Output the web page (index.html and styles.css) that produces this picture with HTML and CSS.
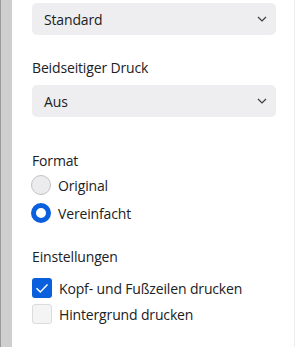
FILE: index.html
```html
<!DOCTYPE html>
<html lang="de">
<head>
  <meta charset="UTF-8">
  <meta name="viewport" content="width=device-width, initial-scale=1.0">
  <title>Drucken</title>
  <link rel="stylesheet" href="styles.css">
</head>
<body>
  <div class="rail"></div>
  <div class="panel">
    <div class="select">
      <span>Standard</span>
      <svg class="chevron" width="10" height="6" viewBox="0 0 10 6"><path d="M1 1l4 4 4-4" fill="none" stroke="#3c3c3c" stroke-width="1.2"/></svg>
    </div>

    <div class="label label-duplex">Beidseitiger Druck</div>
    <div class="select">
      <span>Aus</span>
      <svg class="chevron" width="10" height="6" viewBox="0 0 10 6"><path d="M1 1l4 4 4-4" fill="none" stroke="#3c3c3c" stroke-width="1.2"/></svg>
    </div>

    <div class="label label-format">Format</div>
    <div class="option">
      <span class="radio"></span>
      <span>Original</span>
    </div>
    <div class="option">
      <span class="radio checked"></span>
      <span>Vereinfacht</span>
    </div>

    <div class="label label-settings">Einstellungen</div>
    <div class="option check-row first">
      <span class="checkbox checked">
        <svg width="20" height="20" viewBox="0 0 20 20"><path d="M4.5 10.2l3.8 3.8 7.2-7.5" fill="none" stroke="white" stroke-width="1.5"/></svg>
      </span>
      <span>Kopf- und Fußzeilen drucken</span>
    </div>
    <div class="option check-row">
      <span class="checkbox"></span>
      <span>Hintergrund drucken</span>
    </div>
  </div>
</body>
</html>
```

FILE: styles.css
```css
body {
  margin: 0;
  height: 100vh;
  display: flex;
  font-family: "Open Sans", Arial, sans-serif;
  font-size: 14px;
  letter-spacing: -0.15px;
  color: #202124;
  background-color: white;
  overflow: hidden;
}
.rail {
  width: 11px;
  background-color: #cfcfcf;
  border-left: 1px solid #9a9a9a;
}
.panel {
  flex: 1;
  padding: 3px 18px 0 20px;
  border-right: 1px solid #ededed;
}
.select {
  height: 32px;
  box-sizing: border-box;
  display: flex;
  align-items: center;
  justify-content: space-between;
  padding: 0 9px 0 12px;
  border-radius: 5px;
  background-color: #eeeef0;
}
.label {
  line-height: 20px;
}
.label-duplex {
  margin: 23px 0 7px;
}
.label-format {
  margin-top: 34px;
}
.label-settings {
  margin: 20px 0 8px;
}
.option {
  height: 28px;
  display: flex;
  align-items: center;
  gap: 7px;
}
.check-row {
  height: 26px;
}
.radio {
  width: 20px;
  height: 20px;
  box-sizing: border-box;
  margin-left: -1px;
  border-radius: 50%;
  border: 1px solid #c2c2c4;
  background-color: #ececee;
}
.radio.checked {
  border: 5px solid #0a5fdc;
  background-color: white;
}
.checkbox {
  width: 20px;
  height: 20px;
  box-sizing: border-box;
  border-radius: 3px;
  border: 1px solid #dcdcdc;
  background-color: #f4f4f4;
}
.checkbox.checked {
  border: none;
  background-color: #0a5fdc;
}
.checkbox svg {
  display: block;
}
```
